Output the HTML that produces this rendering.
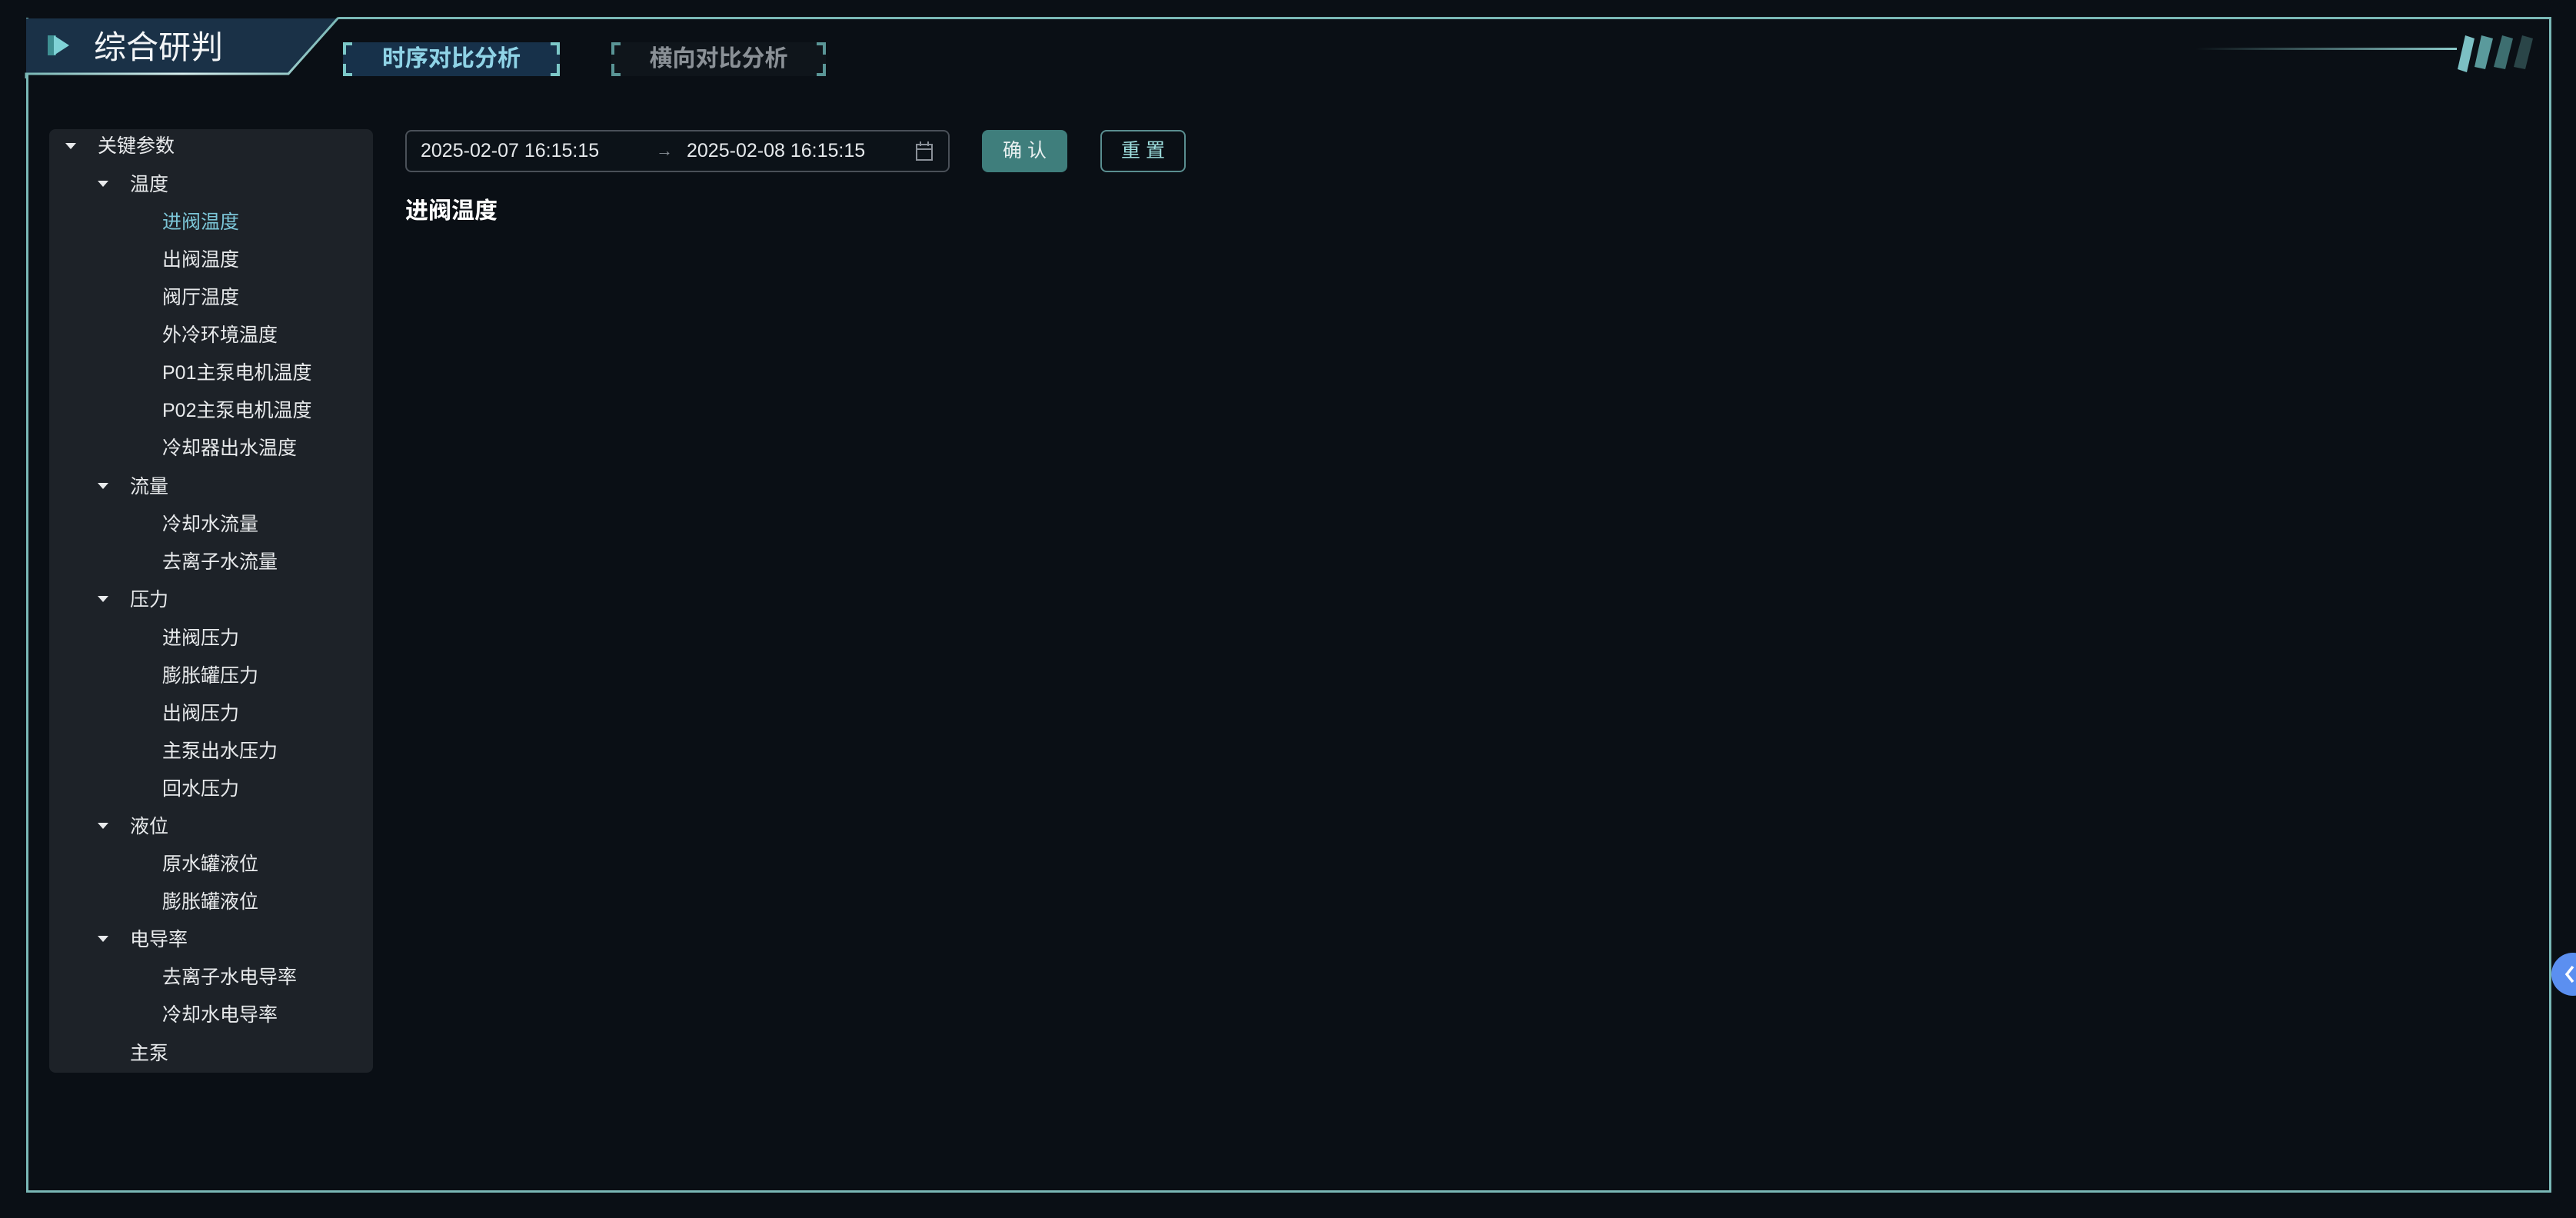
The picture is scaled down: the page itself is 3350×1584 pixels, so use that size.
<!DOCTYPE html>
<html><head><meta charset="utf-8">
<style>
*{margin:0;padding:0;box-sizing:border-box}
html,body{width:3350px;height:1584px;background:#0a0f15;overflow:hidden;font-family:"Liberation Sans","Noto Sans CJK SC",sans-serif;color:#e6e9ec}
.abs{position:absolute}
.frame{left:34px;top:23px;width:3284px;height:1528px;border:3px solid #7ab8b6;border-top:none}
.topline{left:440px;top:22px;width:2878px;height:3px;background:#7ab8b6}
.tree{left:64px;top:168px;width:421px;height:1227px;background:#1d2228;border-radius:8px}
.row{position:absolute;font-size:25px;line-height:30px;color:#e8eaec;white-space:nowrap}
.tri{position:absolute;width:0;height:0;border-left:7px solid transparent;border-right:7px solid transparent;border-top:8px solid #e8eaec}
.tab{position:absolute;top:55px;height:44px;font-size:30px;font-weight:bold;line-height:44px;text-align:center}
</style></head><body>
<div class="abs frame"></div>
<div class="abs topline"></div>
<svg class="abs" style="left:30px;top:20px" width="420" height="82">
<defs><linearGradient id="ul" x1="0" x2="1"><stop offset="0" stop-color="#7ab8b6"/><stop offset="0.5" stop-color="#d8f0f0"/><stop offset="1" stop-color="#7ab8b6"/></linearGradient></defs>
<polygon points="4,4 410,4 345,76 4,76" fill="#1a3147"/>
<polyline points="410,3 345,76 4,76 4,82" fill="none" stroke="url(#ul)" stroke-width="3"/>
<polygon points="32,26 43,26 43,52 32,52" fill="#3e8f92"/>
<polygon points="40,26 60,39 40,52" fill="#7fd2d6"/>
</svg>
<div class="abs" style="left:122px;top:36px;font-size:42px;line-height:52px;color:#f2f4f6">综合研判</div>

<div class="tab" style="left:446px;width:282px;background:#17314a;color:#8fd3e6">时序对比分析</div>
<svg class="abs" style="left:446px;top:55px" width="282" height="44"><path d="M12,2 H2 V16 M2,28 V42 H12 M270,2 H280 V16 M280,28 V42 H270" fill="none" stroke="#7cc8c8" stroke-width="4"/></svg>
<div class="tab" style="left:795px;width:279px;background:#0f151b;color:#8a9096">横向对比分析</div>
<svg class="abs" style="left:795px;top:55px" width="279" height="44"><path d="M12,2 H2 V16 M2,28 V42 H12 M267,2 H277 V16 M277,28 V42 H267" fill="none" stroke="#5a9596" stroke-width="4"/></svg>

<svg class="abs" style="left:2850px;top:40px" width="460" height="60">
<defs><linearGradient id="ln" x1="0" x2="1"><stop offset="0" stop-color="#7ab8b6" stop-opacity="0"/><stop offset="1" stop-color="#8ccaca"/></linearGradient></defs>
<rect x="5" y="22" width="340" height="3" fill="url(#ln)"/>
<polygon points="356,6 368,10 358,54 346,50" fill="#7cc0c4"/>
<polygon points="377,6 392,10 382,50 368,47" fill="#5a9a9c"/>
<polygon points="404,6 418,10 408,50 393,47" fill="#3d6e70"/>
<polygon points="430,6 444,10 434,50 419,47" fill="#2a4548"/>
</svg>

<div class="abs tree"></div>
<div class="abs" style="left:64px;top:168px">
<div class="tri" style="left:21px;top:18px"></div><div class="row" style="left:63px;top:7px">关键参数</div>
<div class="tri" style="left:63px;top:67px"></div><div class="row" style="left:105px;top:57px">温度</div>
<div class="row" style="left:147px;top:106px;color:#7cc6d8">进阀温度</div>
<div class="row" style="left:147px;top:155px">出阀温度</div>
<div class="row" style="left:147px;top:204px">阀厅温度</div>
<div class="row" style="left:147px;top:253px">外冷环境温度</div>
<div class="row" style="left:147px;top:302px">P01主泵电机温度</div>
<div class="row" style="left:147px;top:351px">P02主泵电机温度</div>
<div class="row" style="left:147px;top:400px">冷却器出水温度</div>
<div class="tri" style="left:63px;top:460px"></div><div class="row" style="left:105px;top:450px">流量</div>
<div class="row" style="left:147px;top:499px">冷却水流量</div>
<div class="row" style="left:147px;top:548px">去离子水流量</div>
<div class="tri" style="left:63px;top:607px"></div><div class="row" style="left:105px;top:597px">压力</div>
<div class="row" style="left:147px;top:647px">进阀压力</div>
<div class="row" style="left:147px;top:696px">膨胀罐压力</div>
<div class="row" style="left:147px;top:745px">出阀压力</div>
<div class="row" style="left:147px;top:794px">主泵出水压力</div>
<div class="row" style="left:147px;top:843px">回水压力</div>
<div class="tri" style="left:63px;top:902px"></div><div class="row" style="left:105px;top:892px">液位</div>
<div class="row" style="left:147px;top:941px">原水罐液位</div>
<div class="row" style="left:147px;top:990px">膨胀罐液位</div>
<div class="tri" style="left:63px;top:1049px"></div><div class="row" style="left:105px;top:1039px">电导率</div>
<div class="row" style="left:147px;top:1088px">去离子水电导率</div>
<div class="row" style="left:147px;top:1137px">冷却水电导率</div>
<div class="row" style="left:105px;top:1187px">主泵</div>
</div>

<div class="abs" style="left:527px;top:169px;width:708px;height:55px;border:2px solid #4a5058;border-radius:8px;background:#0c1218"></div>
<div class="abs" style="left:547px;top:180px;font-size:25px;line-height:32px">2025-02-07 16:15:15</div>
<div class="abs" style="left:853px;top:180px;font-size:22px;line-height:32px;color:#8a9098">→</div>
<div class="abs" style="left:893px;top:180px;font-size:25px;line-height:32px">2025-02-08 16:15:15</div>
<svg class="abs" style="left:1190px;top:183px" width="24" height="28"><rect x="2" y="5" width="20" height="20" fill="none" stroke="#8a9098" stroke-width="2"/><line x1="2" y1="11" x2="22" y2="11" stroke="#8a9098" stroke-width="2"/><line x1="7" y1="1" x2="7" y2="7" stroke="#8a9098" stroke-width="2"/><line x1="17" y1="1" x2="17" y2="7" stroke="#8a9098" stroke-width="2"/></svg>

<div class="abs" style="left:1277px;top:169px;width:111px;height:55px;background:#3f7e7c;border-radius:8px;font-size:25px;line-height:55px;text-align:center;color:#e8f0f0">确 认</div>
<div class="abs" style="left:1431px;top:169px;width:111px;height:55px;border:2px solid #5a8e90;border-radius:8px;font-size:25px;line-height:51px;text-align:center;color:#9fe0e0">重 置</div>

<div class="abs" style="left:527px;top:257px;font-size:30px;font-weight:bold;line-height:36px;color:#fff">进阀温度</div>

<div class="abs" style="left:3318px;top:1239px;width:56px;height:56px;border-radius:28px;background:#5b8ff0"></div>
<svg class="abs" style="left:3334px;top:1254px" width="16" height="26"><polyline points="12,3 4,13 12,23" fill="none" stroke="#fff" stroke-width="3.5"/></svg>
</body></html>
